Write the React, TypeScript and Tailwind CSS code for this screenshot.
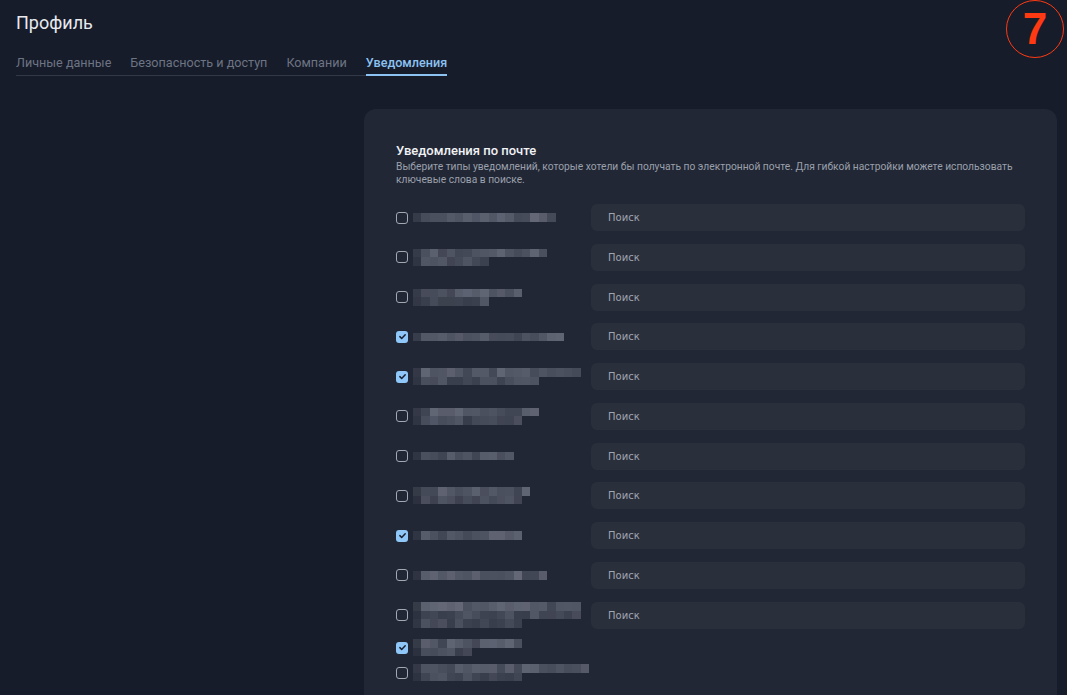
import React from "react";

type Row = { w: number; lines: number; checked: boolean; input: boolean; seed: number };

const rows: Row[] = [
  { w: 144, lines: 1, checked: false, input: true, seed: 3 },
  { w: 136, lines: 2, checked: false, input: true, seed: 7 },
  { w: 110, lines: 2, checked: false, input: true, seed: 11 },
  { w: 152, lines: 1, checked: true, input: true, seed: 5 },
  { w: 170, lines: 2, checked: true, input: true, seed: 13 },
  { w: 128, lines: 2, checked: false, input: true, seed: 17 },
  { w: 102, lines: 1, checked: false, input: true, seed: 19 },
  { w: 118, lines: 2, checked: false, input: true, seed: 23 },
  { w: 110, lines: 1, checked: true, input: true, seed: 29 },
  { w: 136, lines: 1, checked: false, input: true, seed: 31 },
  { w: 172, lines: 3, checked: false, input: true, seed: 37 },
  { w: 110, lines: 2, checked: true, input: false, seed: 41 },
  { w: 178, lines: 2, checked: false, input: false, seed: 43 },
];

function rnd(seed: number, i: number) {
  const x = Math.sin(seed * 97.13 + i * 12.9898) * 43758.5453;
  return x - Math.floor(x);
}

function Pixelated({ w, lines, seed }: { w: number; lines: number; seed: number }) {
  const cell = 8.4;
  const cols = Math.max(1, Math.round(w / cell));
  const bands = lines;
  return (
    <div className="flex flex-col">
      {Array.from({ length: bands }).map((_, r) => {
        const rowCols =
          r === bands - 1 && lines > 1 ? Math.max(3, Math.round(cols * (0.5 + rnd(seed, r * 3) * 0.5))) : cols;
        return (
          <div key={r} className="flex h-[8.5px]">
            {Array.from({ length: rowCols }).map((__, c) => {
              const edge = c === 0 ? 0.35 : 1;
              const a = (0.26 + rnd(seed + r * 5, c) * 0.3) * edge * (lines > 1 && r > 0 ? 0.75 : 1);
              return (
                <div
                  key={c}
                  className="h-full w-[8.4px]"
                  style={{ backgroundColor: `rgba(150,155,170,${a.toFixed(3)})` }}
                />
              );
            })}
          </div>
        );
      })}
    </div>
  );
}

function Checkbox({ checked }: { checked: boolean }) {
  if (checked) {
    return (
      <div className="flex h-[12px] w-[12px] shrink-0 items-center justify-center rounded-[3px] bg-[#8fc8f8]">
        <svg width="9" height="9" viewBox="0 0 12 12" fill="none">
          <path d="M2.5 6.2l2.4 2.4L9.6 3.6" stroke="#1a2030" strokeWidth="2" strokeLinecap="round" strokeLinejoin="round" />
        </svg>
      </div>
    );
  }
  return <div className="h-[12px] w-[12px] shrink-0 rounded-[3px] border-[1.5px] border-[#a3a8b3]" />;
}

export default function App() {
  const inputRows = rows.filter((r) => r.input);
  const extraRows = rows.filter((r) => !r.input);
  return (
    <div
      className="relative h-[695px] w-[1067px] overflow-hidden bg-[#171c2a] text-white"
      style={{ fontFamily: "Roboto, 'Noto Sans', sans-serif" }}
    >
      <div className="absolute left-[1006px] top-0 flex h-[58px] w-[58px] items-center justify-center rounded-full border-[1.5px] border-[#ff3a12]">
        <span
          className="text-[44px] font-bold leading-none text-[#ff3a12]"
          style={{ fontFamily: "'Liberation Sans', Arial, sans-serif" }}
        >
          7
        </span>
      </div>

      <div className="px-[16px] pt-[11px]">
        <h1 className="text-[18px] font-normal leading-[24px] text-[#e8eaee]">Профиль</h1>
        <div className="mt-[18px] inline-flex gap-[19px] whitespace-nowrap border-b border-[#323848] text-[12.6px] leading-[20px]">
          <div className="pb-[2px] text-[#6d7484]">Личные данные</div>
          <div className="pb-[2px] text-[#6d7484]">Безопасность и доступ</div>
          <div className="pb-[2px] text-[#6d7484]">Компании</div>
          <div className="-mb-px border-b-2 border-[#8cc2f2] pb-[1px] font-medium text-[#8cc2f2]">Уведомления</div>
        </div>
      </div>

      <div className="ml-[364px] mr-[10px] mt-[33px] h-[640px] rounded-[12px] bg-[#222735] px-[32px] pt-[34px]">
        <div className="text-[13px] font-medium leading-[16px] text-[#f0f2f5]">Уведомления по почте</div>
        <div className="mt-[1px] w-[630px] text-[10.25px] leading-[13px] text-[#9aa0ac]">
          Выберите типы уведомлений, которые хотели бы получать по электронной почте. Для гибкой настройки можете
          использовать ключевые слова в поиске.
        </div>

        <div className="mt-[18px] flex flex-col gap-[12.75px]">
          {inputRows.map((r, i) => (
            <div key={i} className="flex h-[27px] items-center">
              <div className="flex w-[195px] shrink-0 items-center gap-[5px]">
                <Checkbox checked={r.checked} />
                <Pixelated w={r.w} lines={r.lines} seed={r.seed} />
              </div>
              <div
                className="flex h-[27px] flex-1 items-center rounded-[6px] bg-[#2a2f3c] pl-[17px] text-[10px] text-[#a0a5b0]"
                style={{ fontFamily: "'DejaVu Sans', sans-serif" }}
              >
                Поиск
              </div>
            </div>
          ))}
        </div>
        <div className="mt-[9px] flex flex-col gap-[5px]">
          {extraRows.map((r, i) => (
            <div key={i} className="flex h-[20px] items-center gap-[5px]">
              <Checkbox checked={r.checked} />
              <Pixelated w={r.w} lines={r.lines} seed={r.seed} />
            </div>
          ))}
        </div>
      </div>
    </div>
  );
}
